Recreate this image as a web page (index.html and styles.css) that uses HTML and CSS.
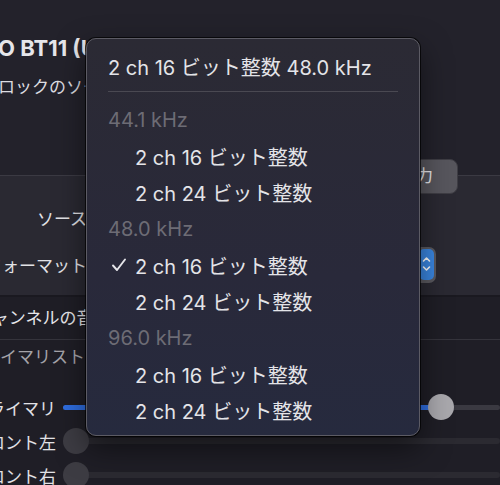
FILE: index.html
```html
<html>
    <head>
        <meta charset="utf-8">
        <link rel="stylesheet" href="styles.css">
    </head>
    <body>
        <div class="window">
            <div class="header">
                <div class="title">O BT11 (USB Audio)</div>
                <div class="subtitle">ロックのソース: 内蔵</div>
            </div>

            <div class="tabbox">
                <div class="tabs">
                    <div class="tab">入力</div>
                    <div class="tab active">出力</div>
                </div>
                <div class="formrow">
                    <div class="label">ソース:</div>
                    <div class="control"></div>
                </div>
                <div class="formrow">
                    <div class="label">フォーマット:</div>
                    <div class="popup">
                        <span class="popup-text">2 ch 16 ビット整数</span>
                        <span class="stepper">
                            <svg width="15" height="30" viewBox="0 0 15 30">
                                <polyline points="4.5,12 7.5,9 10.5,12" fill="none" stroke="#fff" stroke-width="1.6" stroke-linecap="round" stroke-linejoin="round"/>
                                <polyline points="4.5,18 7.5,21 10.5,18" fill="none" stroke="#fff" stroke-width="1.6" stroke-linecap="round" stroke-linejoin="round"/>
                            </svg>
                        </span>
                    </div>
                </div>
            </div>

            <div class="volume">
                <div class="section-title">チャンネルの音量</div>
                <div class="stream">プライマリストリーム</div>
                <div class="slider-row">
                    <div class="slider-label">プライマリ</div>
                    <div class="track">
                        <div class="rail"></div>
                        <div class="fill" style="width: 377px"></div>
                        <div class="thumb light" style="left: 365px"></div>
                    </div>
                </div>
                <div class="slider-row">
                    <div class="slider-label">フロント左</div>
                    <div class="track">
                        <div class="rail wide"></div>
                        <div class="thumb" style="left: 0px"></div>
                    </div>
                </div>
                <div class="slider-row">
                    <div class="slider-label">フロント右</div>
                    <div class="track">
                        <div class="rail wide"></div>
                        <div class="thumb" style="left: 0px"></div>
                    </div>
                </div>
            </div>
        </div>

        <div class="menu">
            <div class="item top">2 ch 16 ビット整数 48.0 kHz</div>
            <div class="separator"></div>
            <div class="item group">44.1 kHz</div>
            <div class="item"><span class="check"></span>2 ch 16 ビット整数</div>
            <div class="item"><span class="check"></span>2 ch 24 ビット整数</div>
            <div class="item group">48.0 kHz</div>
            <div class="item"><span class="check">
                <svg width="16" height="16" viewBox="0 0 16 16">
                    <polyline points="2,8.5 6,13 14,2.5" fill="none" stroke="#e6e6ea" stroke-width="1.9" stroke-linecap="round" stroke-linejoin="round"/>
                </svg>
            </span>2 ch 16 ビット整数</div>
            <div class="item"><span class="check"></span>2 ch 24 ビット整数</div>
            <div class="item group">96.0 kHz</div>
            <div class="item"><span class="check"></span>2 ch 16 ビット整数</div>
            <div class="item"><span class="check"></span>2 ch 24 ビット整数</div>
        </div>
    </body>
</html>
```

FILE: styles.css
```css
body {
    margin: 0;
    width: 500px;
    height: 485px;
    overflow: hidden;
    background: #1f1e26;
    font-family: "Inter", "Noto Sans CJK JP", sans-serif;
    color: #e4e4e8;
    position: relative;
}

.window {
    width: 500px;
    height: 485px;
    overflow: hidden;
}

.header {
    height: 175px;
    background: #23222b;
    padding-top: 33px;
    box-sizing: border-box;
}

.title {
    margin-left: -2px;
    font-size: 22px;
    font-weight: bold;
    white-space: nowrap;
    height: 30px;
    line-height: 30px;
    color: #e6e6ea;
}

.subtitle {
    margin-top: 9px;
    margin-left: -2px;
    font-size: 17px;
    white-space: nowrap;
    height: 30px;
    line-height: 30px;
    color: #dcdce0;
}

.tabbox {
    background: #2a2932;
    border-top: 1px solid #3b3a43;
    border-bottom: 2px solid #1a1920;
    height: 122px;
    box-sizing: border-box;
}

.tabs {
    display: flex;
    justify-content: flex-end;
    margin-top: -17px;
    margin-right: 42px;
}

.tab {
    height: 35px;
    line-height: 33px;
    padding: 0 24px 0 14px;
    font-size: 17px;
    box-sizing: border-box;
    background: #36353d;
    border: 1px solid #45444b;
    color: #e6e6ea;
}

.tab.active {
    background: #57565d;
    border-color: #3e3d44;
    border-radius: 0 8px 8px 0;
}

.formrow {
    display: flex;
    align-items: center;
    height: 47px;
}

.label {
    width: 92px;
    flex: none;
    display: flex;
    justify-content: flex-end;
    font-size: 17px;
    white-space: nowrap;
    color: #e2e2e6;
}

.popup {
    margin-left: 16px;
    width: 328px;
    height: 36px;
    box-sizing: border-box;
    display: flex;
    align-items: center;
    justify-content: space-between;
    background: #5a595f;
    border-radius: 7px;
    padding: 2px 2px 2px 10px;
}

.popup-text {
    font-size: 15px;
    white-space: nowrap;
}

.stepper {
    width: 15px;
    height: 31px;
    background: #3a86e0;
    border-radius: 5px;
    display: flex;
}

.volume {
    padding-top: 8px;
}

.section-title {
    margin-left: -25px;
    font-size: 17px;
    height: 26px;
    line-height: 26px;
    white-space: nowrap;
    color: #e6e6ea;
    padding-bottom: 8px;
    border-bottom: 1px solid #35343c;
}

.stream {
    margin-left: -34px;
    font-size: 17px;
    height: 34px;
    line-height: 34px;
    white-space: nowrap;
    color: #a4a3a9;
    margin-bottom: 16px;
}

.slider-row {
    display: flex;
    align-items: center;
    height: 34px;
}

.slider-label {
    width: 56px;
    flex: none;
    display: flex;
    justify-content: flex-end;
    font-size: 17px;
    white-space: nowrap;
    color: #e2e2e6;
}

.track {
    position: relative;
    margin-left: 7px;
    flex: 1;
    height: 26px;
}

.rail {
    position: absolute;
    left: 0;
    right: 0;
    top: 11px;
    height: 5px;
    background: #3a3941;
    border-radius: 3px;
}

.rail.wide {
    top: 10px;
    height: 6px;
    background: #2b2a31;
}

.fill {
    position: absolute;
    left: 0;
    top: 11px;
    height: 5px;
    background: #2f6ee0;
    border-radius: 3px;
}

.thumb {
    position: absolute;
    top: 0;
    width: 26px;
    height: 26px;
    border-radius: 50%;
    background: #3d3c43;
}

.thumb.light {
    background: #a9a8ad;
}

.menu {
    position: absolute;
    left: 86px;
    top: 38px;
    width: 334px;
    height: 398px;
    box-sizing: border-box;
    border: 1px solid #5c5b64;
    border-radius: 10px;
    background: linear-gradient(#2b2a34, #29293a 60%, #262a3e);
    box-shadow: 0 0 0 1px rgba(0, 0, 0, 0.7), 0 12px 30px rgba(0, 0, 0, 0.5);
    padding: 9px 21px 6px 21px;
    font-size: 20px;
}

.item {
    display: flex;
    align-items: center;
    height: 36.3px;
    white-space: nowrap;
    color: #e4e4e8;
}

.item.top {
    height: 36px;
}

.item.group {
    color: #6d6c75;
}

.check {
    width: 27px;
    flex: none;
    display: flex;
    align-items: center;
    padding-left: 3px;
    box-sizing: border-box;
}

.separator {
    height: 1px;
    background: #4a4952;
    margin: 7px 0 10px 0;
}
```
